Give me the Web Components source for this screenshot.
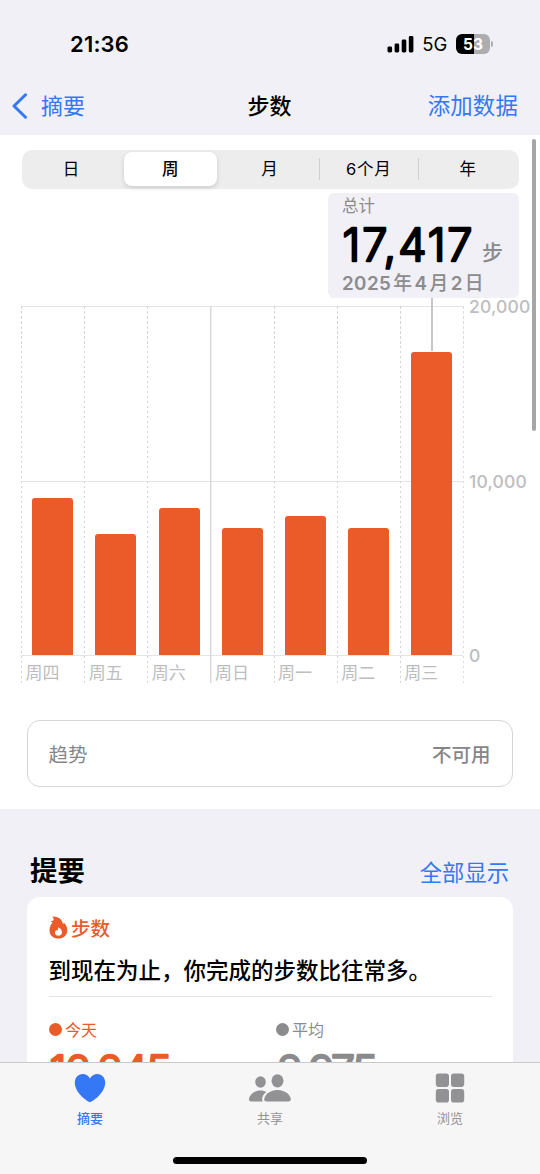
<!DOCTYPE html>
<html lang="zh-CN">
<head>
<meta charset="utf-8">
<meta name="viewport" content="width=device-width, initial-scale=1">
<title>步数</title>
<style>
html, body {
    margin: 0;
    height: 1174px;
    overflow: hidden;
}

body {
    --blue: #3478f6;
    --orange: #eb5a29;
    --gray: #8b8b8d;
    --page: #f1f0f6;
    background: var(--page);
    color: #000;
    font-family: Inter, "Noto Sans CJK SC", sans-serif;
    position: relative;
    width: 540px;
}
</style>
</head>
<body>
<health-app></health-app>
<script>
(function() {
    function define(name, html, setup) {
        const template = document.createElement("template");
        template.innerHTML = html;

        customElements.define(name, class extends HTMLElement {
            constructor() {
                super();
                this.attachShadow({ mode: "open" });
                this.shadowRoot.append(template.content.cloneNode(true));
            }

            connectedCallback() {
                if (setup) setup(this, this.shadowRoot);
            }
        });
    }

    /* Status bar */
    define("status-bar", `
    <style>
    :host {
        align-items: center;
        box-sizing: border-box;
        display: flex;
        height: 76px;
        justify-content: space-between;
        padding: 12px 47px 0 70px;
    }
    .time {
        font-size: 22px;
        font-weight: 600;
        letter-spacing: 0.2px;
        line-height: 26px;
    }
    .right {
        align-items: center;
        display: flex;
    }
    .network {
        font-size: 18.5px;
        letter-spacing: -0.2px;
        line-height: 24px;
        margin: 0 9px 0 8px;
    }
    .battery {
        align-items: center;
        background: linear-gradient(90deg, #000 53%, #adadb0 53%);
        border-radius: 6px;
        color: #fff;
        display: flex;
        font-size: 15.5px;
        font-weight: 700;
        height: 20px;
        justify-content: center;
        width: 34px;
    }
    .cap {
        background: #adadb0;
        border-radius: 0 2px 2px 0;
        height: 6px;
        margin-left: 1px;
        width: 2px;
    }
    </style>
    <span class="time">21:36</span>
    <div class="right">
        <svg width="27" height="18" viewBox="0 0 27 18">
            <rect x="0.5" y="11.5" width="4.6" height="6" rx="1.4"/>
            <rect x="7.6" y="8.5" width="4.6" height="9" rx="1.4"/>
            <rect x="14.7" y="4.5" width="4.6" height="13" rx="1.4"/>
            <rect x="21.8" y="1" width="4.6" height="16.5" rx="1.4"/>
        </svg>
        <span class="network">5G</span>
        <span class="battery">53</span>
        <span class="cap"></span>
    </div>
    `);

    /* Navigation bar */
    define("nav-bar", `
    <style>
    :host {
        align-items: center;
        box-sizing: border-box;
        color: var(--blue);
        display: grid;
        font-size: 22px;
        grid-template-columns: 1fr auto 1fr;
        height: 59px;
        line-height: 30px;
        padding: 0 22px 0 12px;
    }
    .back {
        align-items: center;
        display: flex;
        gap: 13px;
    }
    .title {
        color: #000;
        font-weight: 500;
        padding-left: 9px;
    }
    .action {
        font-size: 22.4px;
        letter-spacing: 0.2px;
        text-align: right;
    }
    </style>
    <span class="back">
        <svg width="16" height="26" viewBox="0 0 16 26" fill="none" stroke="currentColor" stroke-width="3" stroke-linecap="round" stroke-linejoin="round"><path d="M13.5 1.8 2 13 13.5 24.2"/></svg>
        <slot name="back"></slot>
    </span>
    <span class="title"><slot></slot></span>
    <span class="action"><slot name="action"></slot></span>
    `);

    /* Segmented control */
    define("segment-item", `
    <style>
    :host {
        align-items: center;
        border-radius: 8px;
        display: flex;
        flex: 1;
        font-size: 16.5px;
        justify-content: center;
        line-height: 22px;
        margin: 2.5px 4px 2.5px 2.5px;
        position: relative;
    }
    :host([selected]) {
        background: #fff;
        box-shadow: 0 2px 5px rgba(0, 0, 0, 0.14);
        font-weight: 500;
    }
    :host([divided]) {
        letter-spacing: 0.8px;
    }
    :host([divided])::before {
        background: #cfcfd2;
        content: "";
        height: 22px;
        left: -3.5px;
        position: absolute;
        width: 1px;
    }
    </style>
    <slot></slot>
    `);

    define("segmented-control", `
    <style>
    :host {
        background: #ededee;
        border-radius: 10px;
        display: flex;
        height: 39px;
    }
    </style>
    <slot></slot>
    `);

    /* Digits with rounded stroke ends */
    define("rounded-number", `
    <style>
    :host {
        display: block;
    }
    svg {
        display: block;
        overflow: visible;
    }
    text {
        fill: currentColor;
        font-weight: 300;
        stroke: currentColor;
        stroke-linejoin: round;
        stroke-width: 2.4px;
    }
    </style>
    <svg><text x="0.5"></text></svg>
    `, (host, root) => {
        const size = Number(host.getAttribute("size"));
        const width = host.getAttribute("width");
        const svg = root.querySelector("svg");
        const text = root.querySelector("text");

        svg.setAttribute("width", width);
        svg.setAttribute("height", size);
        text.setAttribute("y", size * 0.86);
        text.setAttribute("font-size", size);
        text.setAttribute("textLength", width);
        text.textContent = host.getAttribute("value");
    });

    /* Selected value callout */
    define("value-callout", `
    <style>
    :host {
        background: var(--page);
        border-radius: 6px;
        box-sizing: border-box;
        color: var(--gray);
        display: block;
        height: 105px;
        padding: 3.5px 14px 0;
        position: relative;
        width: 190.5px;
    }
    :host::after {
        background: #c6c6ca;
        content: "";
        height: 53px;
        left: 102.5px;
        position: absolute;
        top: 105px;
        width: 2.5px;
    }
    .caption {
        font-size: 16.5px;
        line-height: 21px;
    }
    .value {
        align-items: flex-end;
        display: flex;
        gap: 10px;
        height: 55px;
    }
    .value rounded-number {
        color: #000;
        margin-bottom: 5.5px;
    }
    .unit {
        font-size: 21px;
        font-weight: 500;
        line-height: 38px;
    }
    .date {
        font-size: 18.8px;
        font-weight: 500;
        line-height: 24px;
        white-space: nowrap;
    }
    </style>
    <div class="caption"><slot name="caption"></slot></div>
    <div class="value">
        <rounded-number size="45" width="130" value="17,417"></rounded-number>
        <span class="unit"><slot name="unit"></slot></span>
    </div>
    <div class="date"><slot name="date"></slot></div>
    `);

    /* Bar chart */
    define("chart-day", `
    <style>
    :host {
        background: repeating-linear-gradient(#d4d4d7 0 2.5px, transparent 2.5px 5px) 0 0 / 1px 100% no-repeat;
        display: block;
        flex: 1;
        height: 377px;
    }
    :host([week-start]) {
        background: linear-gradient(#dadadd, #dadadd) 0 0 / 1.5px 100% no-repeat;
    }
    .plot {
        align-items: flex-end;
        display: flex;
        height: 349px;
        padding-left: 11.3px;
    }
    .bar {
        background: var(--orange);
        border-radius: 3px 3px 0 0;
        width: 41px;
    }
    .label {
        color: #bdbdc0;
        font-size: 17px;
        line-height: 24px;
        padding: 6px 0 0 4.5px;
    }
    </style>
    <div class="plot"><div class="bar"></div></div>
    <div class="label"><slot></slot></div>
    `, (host, root) => {
        root.querySelector(".bar").style.height = host.getAttribute("height") + "px";
    });

    define("bar-chart", `
    <style>
    :host {
        display: flex;
    }
    .days {
        --line: linear-gradient(#e4e4e7, #e4e4e7);
        background: var(--line) 0 0 / 100% 1px no-repeat,
            var(--line) 0 175px / 100% 1px no-repeat,
            var(--line) 0 349px / 100% 1px no-repeat;
        display: flex;
        width: 442px;
    }
    .end {
        background: repeating-linear-gradient(#dcdcdf 0 2.5px, transparent 2.5px 5px);
        height: 377px;
        width: 1px;
    }
    .axis {
        color: #bdbdc0;
        display: flex;
        flex-direction: column;
        font-size: 17.5px;
        font-weight: 450;
        height: 373px;
        justify-content: space-between;
        letter-spacing: 0.2px;
        line-height: 24px;
        margin: -11px 0 0 5px;
    }
    </style>
    <div class="days"><slot></slot></div>
    <div class="end"></div>
    <div class="axis"><span>20,000</span><span>10,000</span><span>0</span></div>
    `);

    /* Trend row */
    define("trend-row", `
    <style>
    :host {
        align-items: center;
        border: 1.5px solid #d6d6d8;
        border-radius: 13px;
        box-sizing: border-box;
        color: #868688;
        display: flex;
        font-size: 19.5px;
        height: 67px;
        justify-content: space-between;
        line-height: 28px;
        padding: 2px 21.5px 0 20.5px;
    }
    .value {
        font-weight: 500;
    }
    </style>
    <slot></slot>
    <span class="value"><slot name="value"></slot></span>
    `);

    /* Summary */
    define("summary-stat", `
    <style>
    :host {
        display: block;
        flex: 0 0 227px;
    }
    .name {
        align-items: center;
        display: flex;
        font-size: 16px;
        gap: 3px;
        height: 22px;
    }
    .dot {
        background: currentColor;
        border-radius: 50%;
        height: 13px;
        width: 13px;
    }
    rounded-number {
        margin-top: 9.5px;
    }
    </style>
    <div class="name"><span class="dot"></span><slot></slot></div>
    `, (host, root) => {
        const number = document.createElement("rounded-number");
        number.setAttribute("size", "43");
        number.setAttribute("width", host.getAttribute("width"));
        number.setAttribute("value", host.getAttribute("value"));
        root.append(number);
    });

    define("summary-card", `
    <style>
    :host {
        background: #fff;
        border-radius: 13px;
        box-sizing: border-box;
        display: block;
        height: 290px;
        padding: 16px 21px 0 22px;
    }
    .kind {
        align-items: center;
        color: var(--orange);
        display: flex;
        font-size: 19.5px;
        font-weight: 500;
        gap: 3px;
        height: 28px;
    }
    .message {
        border-bottom: 1.5px solid #e4e4e6;
        font-size: 22.5px;
        font-weight: 500;
        height: 55px;
        line-height: 59px;
        text-indent: -0.5px;
        white-space: nowrap;
    }
    .stats {
        display: flex;
        padding-top: 21px;
    }
    </style>
    <div class="kind">
        <svg width="19" height="23" viewBox="0 0 19 23">
            <path fill="currentColor" fill-rule="evenodd" d="M3.2.4C9 .2 13.600 3.200 14 8.400c.5-.5.7-1.100.7-1.900 2.400 2.100 3.600 4.800 3.600 7.700 0 5-3.800 8.400-9 8.400-5.100 0-8.800-3.300-8.800-8.400 0-3.200 1.500-5.500 3.100-8C2.800 6.200 2 5.800 1.600 5.100c1.300.1 2.500-.3 3.100-1.100C4.700 2.600 4.200 1.400 3.200.4ZM9.200 11.300c.1 1.600-.5 2.600-1 3.500-.5-.2-.8-.5-1-.9-.8.9-1.200 1.800-1.200 2.800 0 1.800 1.400 3 3.500 3s3.500-1.300 3.500-3.200c0-2.300-1.400-4.200-3.800-5.200Z"/>
        </svg>
        <slot name="kind"></slot>
    </div>
    <div class="message"><slot name="message"></slot></div>
    <div class="stats"><slot></slot></div>
    `);

    define("section-header", `
    <style>
    :host {
        align-items: flex-start;
        display: flex;
        height: 36px;
        justify-content: space-between;
        line-height: 36px;
    }
    .title {
        font-size: 27.4px;
        font-weight: 700;
        padding-top: 1px;
    }
    .link {
        color: var(--blue);
        font-size: 22.3px;
        padding-top: 3px;
    }
    </style>
    <span class="title"><slot></slot></span>
    <span class="link"><slot name="link"></slot></span>
    `);

    /* Tab bar */
    define("tab-item", `
    <style>
    :host {
        align-items: center;
        color: #929294;
        display: flex;
        flex: 1;
        flex-direction: column;
        font-size: 13px;
        line-height: 18px;
    }
    :host([selected]) {
        color: var(--blue);
        font-weight: 500;
    }
    .icon {
        align-items: center;
        display: flex;
        height: 37px;
        margin-bottom: 3px;
    }
    </style>
    <span class="icon"><slot name="icon"></slot></span>
    <slot></slot>
    `);

    define("tab-bar", `
    <style>
    :host {
        background: #f7f6f6;
        border-top: 1px solid #c9c9cb;
        bottom: 0;
        box-sizing: border-box;
        display: flex;
        height: 112px;
        left: 0;
        padding-top: 6px;
        position: absolute;
        right: 0;
    }
    .home {
        background: #000;
        border-radius: 4px;
        bottom: 10.5px;
        height: 7px;
        left: 173px;
        position: absolute;
        width: 194px;
    }
    </style>
    <slot></slot>
    <div class="home"></div>
    `);

    define("scroll-thumb", `
    <style>
    :host {
        background: #a6a6a8;
        border-radius: 3px;
        height: 292px;
        position: absolute;
        right: 4px;
        top: 139px;
        width: 4px;
    }
    </style>
    `);

    /* Page */
    define("health-app", `
    <style>
    :host {
        display: block;
    }
    main {
        background: #fff;
        box-sizing: border-box;
        height: 674px;
        padding: 14.5px 0 0;
    }
    segmented-control {
        margin: 0 21.5px 0 22px;
    }
    value-callout {
        margin: 4px 21.5px 0 auto;
    }
    value-callout b {
        font-weight: 600;
        letter-spacing: 0.4px;
        margin: 0 2px 0 2.5px;
    }
    value-callout b:first-child {
        margin-left: 0;
    }
    bar-chart {
        margin: 8.5px 0 0 21px;
    }
    trend-row {
        margin: 37px 27px 0;
    }
    section {
        padding: 43px 27px 0;
    }
    section-header {
        margin: 0 4px 9px 3px;
    }
    </style>
    <status-bar></status-bar>
    <nav-bar>
        <span slot="back">摘要</span>
        步数
        <span slot="action">添加数据</span>
    </nav-bar>
    <main>
        <segmented-control>
            <segment-item>日</segment-item>
            <segment-item selected>周</segment-item>
            <segment-item>月</segment-item>
            <segment-item divided>6个月</segment-item>
            <segment-item divided>年</segment-item>
        </segmented-control>
        <value-callout>
            <span slot="caption">总计</span>
            <span slot="unit">步</span>
            <span slot="date"><b>2025</b>年<b>4</b>月<b>2</b>日</span>
        </value-callout>
        <bar-chart>
            <chart-day height="157">周四</chart-day>
            <chart-day height="121.5">周五</chart-day>
            <chart-day height="147.5">周六</chart-day>
            <chart-day height="127" week-start>周日</chart-day>
            <chart-day height="139">周一</chart-day>
            <chart-day height="127.5">周二</chart-day>
            <chart-day height="303">周三</chart-day>
        </bar-chart>
        <trend-row>趋势<span slot="value">不可用</span></trend-row>
    </main>
    <section>
        <section-header>提要<span slot="link">全部显示</span></section-header>
        <summary-card>
            <span slot="kind">步数</span>
            <span slot="message">到现在为止，你完成的步数比往常多。</span>
            <summary-stat value="16,245" width="122" style="color: var(--orange)">今天</summary-stat>
            <summary-stat value="8,975" width="101" style="color: var(--gray)">平均</summary-stat>
        </summary-card>
    </section>
    <tab-bar>
        <tab-item selected>
            <svg slot="icon" width="32" height="30" viewBox="0 0 32 30"><path fill="currentColor" d="M16 29.300C14.500 29.300.8 20.500.8 9.600.8 4.500 4.200.9 8.700.9c3.200 0 5.800 1.700 7.300 4.500C17.500 2.600 20.100.9 23.300.9c4.500 0 7.900 3.600 7.900 8.700 0 10.900-13.700 19.700-15.200 19.700Z"/></svg>
            摘要
        </tab-item>
        <tab-item>
            <svg slot="icon" width="42" height="28" viewBox="0 0 42 28" fill="currentColor">
                <ellipse cx="11.5" cy="8" rx="5.3" ry="5.8"/>
                <ellipse cx="28.5" cy="6.8" rx="6" ry="6.6"/>
                <path d="M2 27.500C.8 27.500 0 26.900 0 25.600c0-4 4.600-9.200 11.500-9.200 2.400 0 4.300.6 5.900 1.500-2.700 2-4.300 4.500-4.300 7 0 1.100.2 1.900.7 2.600Z"/>
                <path d="M17.700 27.500c-1.700 0-2.500-.7-2.500-2 0-4 5-9.600 13.300-9.600s13.300 5.600 13.300 9.600c0 1.300-.8 2-2.500 2Z"/>
            </svg>
            共享
        </tab-item>
        <tab-item>
            <svg slot="icon" width="30" height="30" viewBox="0 0 30 30" fill="currentColor">
                <rect x="0.8" y="0.5" width="13.2" height="13.4" rx="2.8"/>
                <rect x="16" y="0.5" width="13.2" height="13.4" rx="2.8"/>
                <rect x="0.8" y="16.1" width="13.2" height="13.4" rx="2.8"/>
                <rect x="16" y="16.1" width="13.2" height="13.4" rx="2.8"/>
            </svg>
            浏览
        </tab-item>
    </tab-bar>
    <scroll-thumb></scroll-thumb>
    `);
})();
</script>
</body>
</html>
